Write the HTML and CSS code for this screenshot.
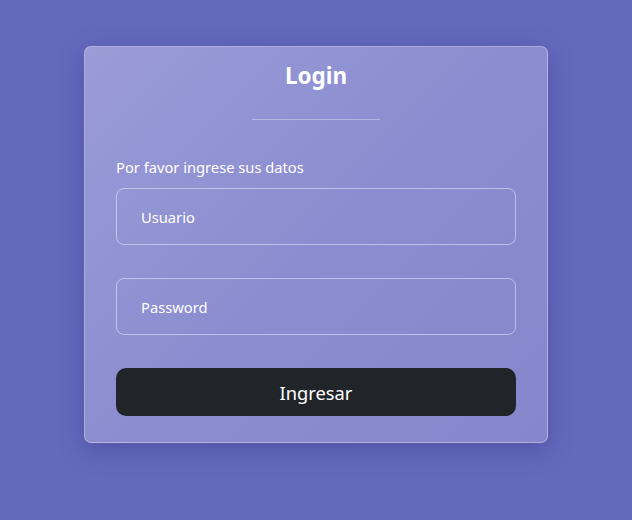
FILE: index.html
```html
<!DOCTYPE html>
<html lang="es">
<head>
<meta charset="utf-8">
<title>Login</title>
<link rel="stylesheet" href="styles.css">
</head>
<body>
<main class="page">
  <form class="card">
    <h1 class="title">Login</h1>
    <hr class="divider">
    <p class="hint">Por favor ingrese sus datos</p>
    <div class="field"><input class="input" type="text" placeholder="Usuario"></div>
    <div class="field"><input class="input" type="password" placeholder="Password"></div>
    <button class="btn" type="button">Ingresar</button>
  </form>
</main>
</body>
</html>
```

FILE: styles.css
```css
* { box-sizing: border-box; }
html, body { margin: 0; padding: 0; }
body {
  background: #6569be;
  font-family: "Segoe UI", "Noto Sans", "Open Sans", sans-serif;
  color: #fff;
  height: 520px;
}
.page {
  display: flex;
  justify-content: center;
  padding-top: 46px;
}
.card {
  width: 464px;
  height: 397px;
  border: 1px solid rgba(255,255,255,0.3);
  border-radius: 7px;
  background: linear-gradient(135deg, #9a9bd7 0%, #8b8dd0 50%, #8587cc 100%);
  box-shadow: 0 6px 24px rgba(40,40,110,0.35);
  padding: 13px 31px 0;
  display: flex;
  flex-direction: column;
}
.title {
  margin: 0;
  text-align: center;
  font-size: 22.5px;
  font-weight: 700;
  line-height: 32px;
}
.divider {
  width: 128px;
  margin: 27px auto 0;
  border: 0;
  height: 1px;
  background: rgba(255,255,255,0.35);
}
.hint {
  margin: 36px 0 0;
  font-size: 14.7px;
  line-height: 22px;
}
.field { margin-top: 10px; }
.field + .field { margin-top: 33px; }
.input {
  display: block;
  width: 400px;
  height: 57px;
  border: 1px solid rgba(255,255,255,0.45);
  border-radius: 8px;
  background: transparent;
  padding: 0 24px;
  font-family: inherit;
  font-size: 14.7px;
  color: #fff;
  outline: none;
}
.input::placeholder { color: #fff; opacity: 1; }
.btn {
  margin-top: 33px;
  width: 400px;
  height: 48px;
  border: 0;
  border-radius: 10px;
  background: #212529;
  color: #fff;
  font-family: inherit;
  font-size: 18.3px;
}
```
